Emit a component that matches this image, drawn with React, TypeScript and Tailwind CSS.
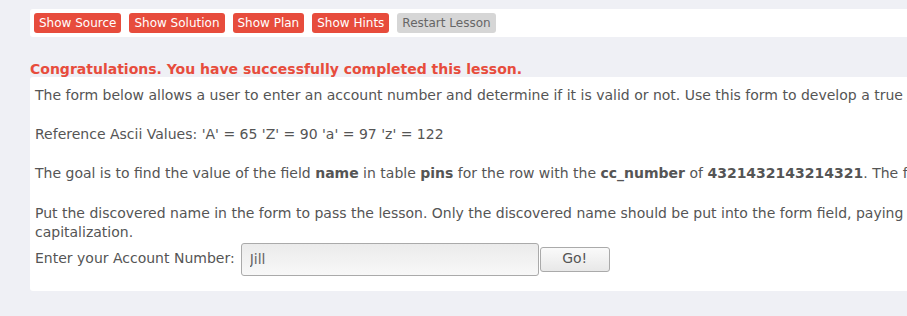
import React from "react";

const actions = ["Show Source", "Show Solution", "Show Plan", "Show Hints"];

export default function App() {
  return (
    <div
      className="w-[907px] h-[316px] overflow-hidden bg-[#eff0f5] text-[#555] text-[14px]"
      style={{ fontFamily: '"DejaVu Sans", Verdana, sans-serif' }}
    >
      <div className="w-[1400px] pl-[30px] pt-[9px]">
        {/* lesson toolbar */}
        <div className="flex gap-2 items-center h-[28px] px-[4px] bg-white rounded-[3px]">
          {actions.map((a) => (
            <button
              key={a}
              className="h-[20px] px-[5px] rounded-[3px] bg-[#e74c3c] text-white text-[12px] leading-[20px]"
            >
              {a}
            </button>
          ))}
          <button className="h-[20px] px-[5px] rounded-[3px] bg-[#d6d6d6] text-[#666] text-[12px] leading-[20px]">
            Restart Lesson
          </button>
        </div>

        <div className="mt-[24px] h-[17px] font-bold text-[#e74c3c] text-[14px] leading-[17px]">
          Congratulations. You have successfully completed this lesson.
        </div>

        {/* lesson content */}
        <div className="mt-[-1px] bg-white rounded-[3px] pl-[5px] pt-[9px] pb-[15px] leading-[19.5px]">
          <p className="whitespace-nowrap mb-[19.5px]">
            The form below allows a user to enter an account number and determine if it is valid or not. Use this form to develop a true / false test check other entries in the database.
          </p>
          <p className="whitespace-nowrap mb-[19.5px]">
            Reference Ascii Values: 'A' = 65 'Z' = 90 'a' = 97 'z' = 122
          </p>
          <p className="whitespace-nowrap mb-[20px]">
            The goal is to find the value of the field <b>name</b> in table <b>pins</b> for the row with the{" "}
            <b>cc_number</b> of <b>4321432143214321</b>. The field is of type varchar, which is a string.
          </p>
          <p className="whitespace-nowrap">
            Put the discovered name in the form to pass the lesson. Only the discovered name should be put into the form field, paying close attention to the spelling and
            <br />
            capitalization.
          </p>
          <form className="flex items-center" onSubmit={(e) => e.preventDefault()}>
            <span>Enter your Account Number:</span>
            <input
              defaultValue="Jill"
              className="ml-[6px] w-[298px] h-[33px] px-[8px] border border-[#aaa] rounded-[3px] bg-gradient-to-b from-[#ebebeb] to-[#f8f8f8] text-[#666] text-[14px] outline-none"
            />
            <button className="ml-[1px] w-[70px] h-[25px] border border-[#aaa] rounded-[3px] bg-gradient-to-b from-[#fafafa] to-[#e8e8e8] text-[#555] text-[14px]">
              Go!
            </button>
          </form>
        </div>
      </div>
    </div>
  );
}
